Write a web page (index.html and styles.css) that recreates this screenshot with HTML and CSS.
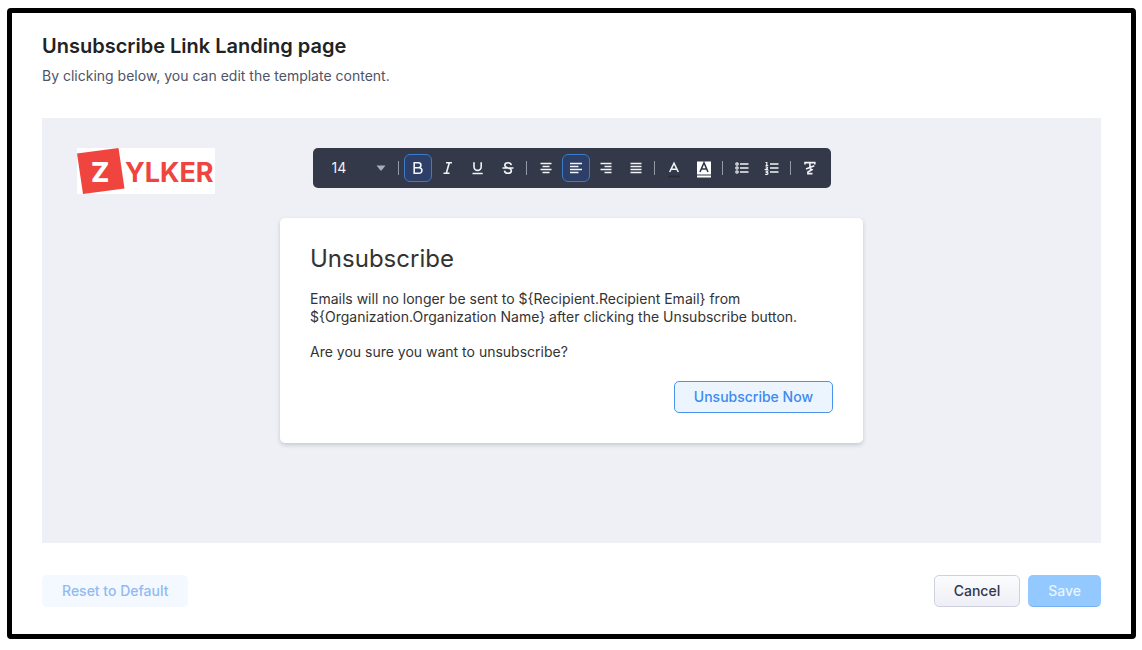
FILE: index.html
```html
<!DOCTYPE html>
<html lang="en">
<head>
<meta charset="utf-8">
<meta name="viewport" content="width=device-width, initial-scale=1">
<title>Unsubscribe Link Landing page</title>
<link rel="stylesheet" href="styles.css">
</head>
<body>
<main class="frame">
  <header class="page-header">
    <h1 class="page-title">Unsubscribe Link Landing page</h1>
    <p class="page-subtitle">By clicking below, you can edit the template content.</p>
  </header>

  <section class="canvas" aria-label="Template">
    <div class="canvas-top">
      <svg class="logo" width="138" height="46" viewBox="0 0 138 46" role="img" aria-label="Zylker">
        <rect width="138" height="46" fill="#fff"/>
        <path d="M0 5.500 41.500 0 47.500 40.500 6 46z" fill="#f0443e"/>
        <text class="logo-initial" x="14" y="34">Z</text>
        <text class="logo-name" x="48" y="34">YLKER</text>
      </svg>
      <div class="toolbar" role="toolbar" aria-label="Text formatting">
        <div class="size-field">
          <select class="size-select" aria-label="Font size"><option>14</option></select>
          <svg class="size-caret" width="10" height="6" viewBox="0 0 10 6"><path d="M.5.500h9L5.500 5.500h-1z" fill="#a9adb8"/></svg>
        </div>
        <span class="separator"></span>
        <button class="tool tool-active" type="button" aria-label="Bold"><svg viewBox="0 0 16 16"><path d="M4.200 2.700h4.200a2.500 2.500 0 0 1 0 5H4.200zM4.200 7.700h4.900a2.800 2.800 0 0 1 0 5.600H4.200z"/></svg></button>
        <button class="tool" type="button" aria-label="Italic"><svg viewBox="0 0 16 16"><path d="M6 2.700h6M3.500 13.300h6M9.300 2.700 6.300 13.300"/></svg></button>
        <button class="tool" type="button" aria-label="Underline"><svg viewBox="0 0 16 16"><path d="M4 2.300v4.500a3.600 3.600 0 0 0 7.200 0V2.300M2.500 13.500h10.200"/></svg></button>
        <button class="tool" type="button" aria-label="Strikethrough"><svg viewBox="0 0 16 16"><path d="M11.300 5.200C11 3.300 9.800 2.700 8 2.700c-2 0-3.200 1-3.200 2.500 0 1.700 1.500 2.200 3.200 2.700 2.200.6 3.400 1.100 3.400 2.800 0 1.600-1.300 2.600-3.400 2.600s-3.400-.9-3.500-2.700M2.500 8h11"/></svg></button>
        <span class="separator"></span>
        <button class="tool" type="button" aria-label="Align center"><svg viewBox="0 0 16 16"><path d="M2.500 3.500h11M4.500 6.500h7M2.500 9.500h11M4.500 12.500h7"/></svg></button>
        <button class="tool tool-active" type="button" aria-label="Align left"><svg viewBox="0 0 16 16"><path d="M2 3.500h12M2 6.500h8.500M2 9.500h12M2 12.500h8.500"/></svg></button>
        <button class="tool" type="button" aria-label="Align right"><svg viewBox="0 0 16 16"><path d="M2.500 3.500h11M6.500 6.500h7M2.500 9.500h11M6.500 12.500h7"/></svg></button>
        <button class="tool" type="button" aria-label="Justify"><svg viewBox="0 0 16 16"><path d="M2.500 3.500h11M2.500 6.500h11M2.500 9.500h11M2.500 12.500h11"/></svg></button>
        <span class="separator"></span>
        <button class="tool" type="button" aria-label="Text color"><svg viewBox="0 0 16 16"><path d="M3.700 12 8 3.200 12.300 12M5 9.300h6"/><path d="M2 16.500h12" stroke="#292d38"/></svg></button>
        <button class="tool" type="button" aria-label="Background color"><svg viewBox="0 0 16 16"><path d="M1 1.500h14v13H1zM1 15.500h14v2H1z" fill="#fff" stroke="none"/><path d="M4 12 8 2.800l4 9.200M5.300 9h5.400" stroke="#333949"/></svg></button>
        <span class="separator"></span>
        <button class="tool" type="button" aria-label="Bulleted list"><svg viewBox="0 0 16 16"><path d="M6 4h8.500M6 8h8.500M6 12h8.500"/><g stroke-width="1.200"><circle cx="3" cy="4" r="1.200"/><circle cx="3" cy="8" r="1.200"/><circle cx="3" cy="12" r="1.200"/></g></svg></button>
        <button class="tool" type="button" aria-label="Numbered list"><svg viewBox="0 0 16 16"><path d="M6 4h8.500M6 8h8.500M6 12h8.500"/><path d="M1.500 2.500h1.300V5.500M1.500 5.500h2.700M1.600 7.200c1.300-.7 2.600.2 1.700 1.100L1.700 9.500h2.500M1.500 11.200h2.200l-1 1.200c1.700 0 1.700 2-.1 2-.5 0-1-.1-1.300-.4" stroke-width="1.200"/></svg></button>
        <span class="separator"></span>
        <button class="tool" type="button" aria-label="Clear formatting"><svg viewBox="0 0 16 16"><path d="M3 4.500V2.600h9.800v1.900M7.900 2.600v5.900M4 9l8.300-3.300M7.900 8.500l2 1.200-4 2.300v1.600h4.600"/></svg></button>
      </div>
    </div>

    <article class="card">
      <h2 class="card-title">Unsubscribe</h2>
      <p class="card-text">Emails will no longer be sent to ${Recipient.Recipient Email} from ${Organization.Organization Name} after clicking the Unsubscribe button.</p>
      <p class="card-text">Are you sure you want to unsubscribe?</p>
      <div class="card-actions"><button class="button button-outline" type="button">Unsubscribe Now</button></div>
    </article>
  </section>

  <footer class="page-footer">
    <button class="button button-reset" type="button">Reset to Default</button>
    <div class="footer-actions">
      <button class="button button-cancel" type="button">Cancel</button>
      <button class="button button-save" type="button">Save</button>
    </div>
  </footer>
</main>
</body>
</html>
```

FILE: styles.css
```css
* {
  box-sizing: border-box;
}

body {
  margin: 0;
  padding: 8px 6px 11px 7px;
  min-height: 100vh;
  display: flex;
  background: #fff;
  color: #333;
  font: 14px/18px Inter, "Open Sans", sans-serif;
}

h1, h2, p {
  margin: 0;
}

button, select {
  font: inherit;
}

.frame {
  flex: 1;
  min-width: 0;
  display: flex;
  flex-direction: column;
  padding: 20px 30px 27px;
  border: 5px solid #000;
  border-radius: 4px;
}

.page-header {
  display: grid;
  gap: 8px;
  padding-bottom: 33px;
}

.page-title {
  font-size: 20px;
  line-height: 26px;
  font-weight: 600;
  color: #222;
}

.page-subtitle {
  color: #4d5468;
}

.canvas {
  flex: 1;
  padding: 30px 35px;
  background: #eff0f5;
}

.canvas-top {
  display: grid;
  grid-template-columns: 1fr auto 1fr;
  align-items: start;
  margin-bottom: 24px;
}

.logo {
  display: block;
  overflow: visible;
}

.logo-initial, .logo-name {
  font-family: Inter, sans-serif;
  font-size: 27px;
  font-weight: 700;
  fill: #f0443e;
}

.logo-initial {
  fill: #fff;
  font-weight: 800;
}

.toolbar {
  display: flex;
  align-items: center;
  gap: 2px;
  height: 40px;
  padding: 0 7px;
  border-radius: 5px;
  background: #333949;
}

.size-field {
  display: grid;
  align-items: center;
  width: 74px;
}

.size-select, .size-caret {
  grid-area: 1 / 1;
}

.size-select {
  appearance: none;
  width: 100%;
  height: 28px;
  padding: 0 12px;
  border: 0;
  background: none;
  color: #f2f3f6;
}

.size-caret {
  justify-self: end;
  margin-right: 8px;
  pointer-events: none;
}

.separator {
  width: 1px;
  height: 14px;
  margin: 0 3px 0 2px;
  background: #9499a6;
}

.tool {
  display: grid;
  place-items: center;
  width: 28px;
  height: 28px;
  padding: 0;
  border: 1px solid transparent;
  border-radius: 6px;
  background: none;
}

.tool-active {
  border-color: #3c7bc9;
  background: #2d3f66;
}

.tool svg {
  width: 16px;
  height: 16px;
  overflow: visible;
  fill: none;
  stroke: #f2f3f6;
  stroke-width: 1.6;
}

.card {
  display: grid;
  gap: 17px;
  max-width: 583px;
  margin: 0 auto;
  padding: 26px 30px 30px;
  border-radius: 5px;
  background: #fff;
  box-shadow: 0 2px 4px rgba(40, 45, 65, 0.2);
}

.card-title {
  font-size: 24px;
  line-height: 29px;
  font-weight: 400;
}

.card-actions {
  display: flex;
  justify-content: flex-end;
  padding-top: 3px;
}

.button {
  height: 32px;
  padding: 0 19px;
  border: 1px solid transparent;
  border-radius: 5px;
  font-weight: 500;
}

.button-outline {
  border-color: #4b94ee;
  background: #ecf5fe;
  color: #3d8af0;
}

.page-footer, .footer-actions {
  display: flex;
  align-items: center;
}

.page-footer {
  justify-content: space-between;
  padding-top: 32px;
}

.footer-actions {
  gap: 8px;
}

.button-reset {
  background: #f3f9ff;
  color: #92b9f3;
}

.button-cancel {
  border-color: #cfd1de;
  background: linear-gradient(#fcfcfe, #eeeff6);
  color: #31374a;
}

.button-save {
  border-bottom-color: #74b1f4;
  background: #93c9ff;
  color: #e9f5ff;
}
```
